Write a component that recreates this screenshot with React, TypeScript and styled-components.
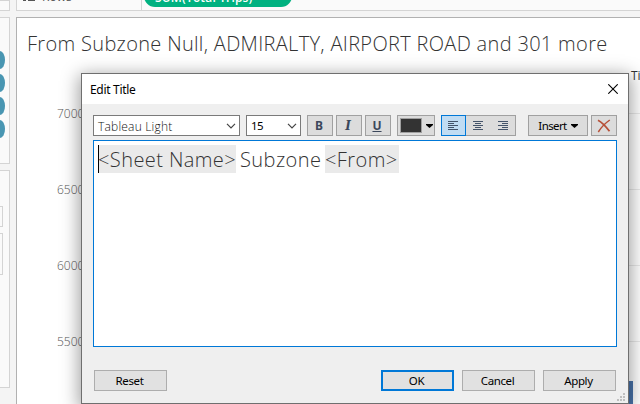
import React from "react";
import styled, { createGlobalStyle } from "styled-components";

const GlobalStyle = createGlobalStyle`
  * { box-sizing: border-box; }
  body { margin: 0; overflow: hidden; background: #f4f4f4; font-family: "Open Sans", sans-serif; }
`;

const Workspace = styled.div`
  position: relative;
  width: 640px;
  height: 404px;
  overflow: hidden;
  display: grid;
  grid-template-columns: 10px 624px;
  column-gap: 6px;
  background: #f4f4f4;
`;

const Sidebar = styled.aside`
  display: flex;
  flex-direction: column;
  gap: 6px;
  height: 404px;
`;

const Card = styled.section<{ $height: number }>`
  height: ${(p) => p.$height}px;
  flex: none;
  background: #fafafa;
  border: solid #d4d4d4;
  border-width: 1px 1px 1px 0;
  overflow: hidden;
`;

const MarksCard = styled(Card)`
  display: flex;
  flex-direction: column;
  gap: 5px;
  padding-top: 33px;
`;

const FieldEnd = styled.div`
  width: 5px;
  height: 18px;
  flex: none;
  border-radius: 0 5px 5px 0 / 0 9px 9px 0;
  background: #4996b2;
`;

const LegendCard = styled(Card)`
  padding-top: 35px;
`;

const LegendBox = styled.div<{ $height: number }>`
  width: 3px;
  height: ${(p) => p.$height}px;
  margin-bottom: 6px;
  border: solid #d4d4d4;
  border-width: 1px 1px 1px 0;
`;

const Main = styled.main`
  display: flex;
  flex-direction: column;
  gap: 6px;
`;

const Shelf = styled.div`
  height: 11px;
  flex: none;
  display: grid;
  grid-template-columns: 125px 1fr;
  background: #fafafa;
  border: solid #d4d4d4;
  border-width: 0 0 1px 1px;
  overflow: hidden;
`;

const ShelfName = styled.div`
  display: flex;
  gap: 7px;
  padding-left: 6px;
  border-right: 1px solid #d4d4d4;
  color: #555;
  font-size: 12px;
  line-height: 16px;
  span { margin-top: -11px; }
`;

const Pill = styled.div`
  width: 148px;
  height: 22px;
  margin: -15px 0 0 2px;
  padding-left: 11px;
  border-radius: 11px;
  background: #00b180;
  color: #fff;
  font-size: 12px;
  font-weight: 600;
  line-height: 25px;
  letter-spacing: 0.15px;
`;

const Sheet = styled.section`
  flex: 1;
  position: relative;
  padding: 14px 0 0 10px;
  background: #fff;
  border: solid #b1b1b1;
  border-width: 1px 0 0 1px;
  overflow: hidden;
`;

const SheetTitle = styled.h1`
  margin: 0;
  height: 24px;
  color: #333;
  font-size: 20px;
  font-weight: 300;
  line-height: 24px;
  letter-spacing: 0.32px;
  white-space: nowrap;
`;

const Chart = styled.div`
  height: 350px;
  padding-top: 19px;
`;

const AxisRow = styled.div`
  display: flex;
  align-items: center;
  height: 76px;
  color: #555;
  font-size: 12px;
  font-weight: 300;
  padding-left: 30px;
  &::after { content: ""; flex: 1; height: 1px; margin-left: 8px; background: #e9e9e9; }
`;

const HeaderText = styled.div`
  position: absolute;
  left: 614px;
  top: 51px;
  color: #333;
  font-size: 12px;
  line-height: 14px;
`;

const Bar = styled.div<{ $x: number }>`
  position: absolute;
  left: ${(p) => p.$x}px;
  top: 363px;
  width: 45px;
  height: 24px;
  background: #4a74ab;
`;

const Dialog = styled.div`
  position: absolute;
  left: 81px;
  top: 73px;
  width: 548px;
  height: 331px;
  background: #efefef;
  border: 1px solid #6f6f6f;
  box-shadow: 0 4px 17px 2px rgba(0, 0, 0, 0.38);
  color: #000;
  font-family: "Noto Sans", sans-serif;
  font-size: 12px;
`;

const TitleBar = styled.header`
  display: flex;
  align-items: center;
  justify-content: space-between;
  height: 30px;
  padding: 0 10px 0 8px;
  background: #fff;
  letter-spacing: -0.3px;
`;

const Toolbar = styled.div`
  display: flex;
  height: 21px;
  margin: 11px 0 4px 11px;
`;

const Select = styled.div<{ $width: number }>`
  display: flex;
  align-items: center;
  justify-content: space-between;
  width: ${(p) => p.$width}px;
  margin-right: 6px;
  padding: 0 3px 0 4px;
  background: #fff;
  border: 1px solid #7a7a7a;
  font-family: "Noto Sans", sans-serif;
  font-size: 11.5px;
  letter-spacing: -0.5px;
`;

const FontName = styled.span`
  font-family: "Open Sans", sans-serif;
  font-weight: 300;
  color: #111;
  font-size: 12px;
  letter-spacing: 0.2px;
  padding-top: 2px;
`;

const ToolButton = styled.button<{ $width?: number; $gap?: number }>`
  display: flex;
  align-items: center;
  justify-content: center;
  width: ${(p) => p.$width ?? 26}px;
  height: 21px;
  margin: 0 ${(p) => p.$gap ?? 3}px 0 0;
  padding: 0;
  background: #dcdcdc;
  border: 1px solid #a0a0a0;
  color: #000;
  font: 11.5px "Noto Sans", sans-serif;
  letter-spacing: -0.6px;
`;

const StyleButton = styled(ToolButton)<{ $italic?: boolean; $underline?: boolean }>`
  color: #3b475b;
  padding-right: 2px;
  letter-spacing: 0;
  font: ${(p) => (p.$italic ? "italic 700 13px 'DejaVu Serif', serif" : "700 12px 'Noto Sans', sans-serif")};
  font-size: 12px;
  text-decoration: ${(p) => (p.$underline ? "underline" : "none")};
`;

const InsertLabel = styled.span`
  margin-right: 4px;
`;

const Swatch = styled.span`
  width: 22px;
  height: 15px;
  margin-right: 4px;
  background: #333;
  border: 1px solid #a0a0a0;
`;

const AlignGroup = styled.div`
  display: flex;
  width: 75px;
  margin-right: 12px;
  background: #dcdcdc;
  border: 1px solid #a0a0a0;
`;

const AlignOption = styled.div<{ $active?: boolean }>`
  display: flex;
  align-items: center;
  justify-content: center;
  width: 25px;
  margin: ${(p) => (p.$active ? "-1px 0 -1px -1px" : "0")};
  border: ${(p) => (p.$active ? "1px solid #0078d7" : "0")};
  background: ${(p) => (p.$active ? "#c0dcf3" : "transparent")};
`;

const Editor = styled.div`
  display: flex;
  width: 524px;
  height: 207px;
  margin-left: 11px;
  padding: 4px;
  background: #fff;
  border: 1px solid #0078d7;
  color: #333;
  font-family: "Open Sans", sans-serif;
  font-size: 20px;
  font-weight: 300;
  line-height: 29px;
  letter-spacing: 0.42px;
  white-space: nowrap;
`;

const Token = styled.span<{ $width: number; $caret?: boolean }>`
  width: ${(p) => p.$width}px;
  height: 28px;
  background: #eaeaea;
  box-shadow: ${(p) => (p.$caret ? "inset 1px 0 #000" : "none")};
`;

const PlainText = styled.span`
  width: 89px;
  padding-left: 4px;
`;

const Footer = styled.footer`
  display: flex;
  gap: 8px;
  padding: 23px 0 0 12px;
`;

const PushButton = styled.button<{ $primary?: boolean; $first?: boolean }>`
  width: 73px;
  height: 21px;
  margin: 0 ${(p) => (p.$first ? 206 : 0)}px 0 0;
  padding: 0 2px 0 0;
  background: #e1e1e1;
  border: ${(p) => (p.$primary ? "2px solid #0078d7" : "1px solid #adadad")};
  color: #000;
  font: 11.5px/18px "Noto Sans", sans-serif;
  letter-spacing: -0.4px;
`;

const Grip = styled.svg`
  position: absolute;
  right: 3px;
  bottom: 2px;
`;

const Chevron = () => (
  <svg width="10" height="6" viewBox="0 0 10 6">
    <path d="M1 .8 5 4.8 9 .8" fill="none" stroke="#444" strokeWidth="1.2" />
  </svg>
);

const Arrow = () => (
  <svg width="7" height="4" viewBox="0 0 7 4">
    <path d="M0 0h7v1L3.5 4 0 1z" fill="#000" />
  </svg>
);

const alignStarts = { left: [0, 0], center: [0, 2], right: [0, 4] };

const AlignIcon = ({ side }: { side: keyof typeof alignStarts }) => (
  <svg width="10" height="9" viewBox="0 0 10 9" shapeRendering="crispEdges">
    {[0, 1, 2, 3, 4].map((i) => (
      <rect key={i} x={alignStarts[side][i % 2]} y={i * 2} width={i % 2 ? 6 : 10} height="1" fill="#44546a" />
    ))}
  </svg>
);

export default function App() {
  return (
    <>
      <GlobalStyle />
      <Workspace>
        <Sidebar>
          <Card $height={11} />
          <MarksCard $height={147}>
            <FieldEnd /><FieldEnd /><FieldEnd /><FieldEnd />
          </MarksCard>
          <LegendCard $height={218}>
            <LegendBox $height={21} />
            <LegendBox $height={42} />
          </LegendCard>
        </Sidebar>
        <Main>
          <Shelf>
            <ShelfName>
              <svg width="12" height="3" viewBox="0 0 12 3" shapeRendering="crispEdges">
                <path d="M0 0h3v1H0zM5 0h7v1H5z" fill="#555" />
              </svg>
              <span>Rows</span>
            </ShelfName>
            <Pill>SUM(Total Trips)</Pill>
          </Shelf>
          <Sheet>
            <SheetTitle>From Subzone Null, ADMIRALTY, AIRPORT ROAD and 301 more</SheetTitle>
            <Chart>
              {[7000, 6500, 6000, 5500].map((v) => <AxisRow key={v}>{v}</AxisRow>)}
            </Chart>
            <HeaderText>Time</HeaderText>
            {[211, 271, 571].map((x) => <Bar key={x} $x={x} />)}
          </Sheet>
        </Main>
        <Dialog role="dialog" aria-label="Edit Title">
          <TitleBar>
            Edit Title
            <svg width="10" height="10" viewBox="0 0 10 10">
              <path d="m.3.3 9.4 9.4M9.7.3.3 9.7" stroke="#000" strokeWidth="1.1" />
            </svg>
          </TitleBar>
          <Toolbar>
            <Select $width={147}><FontName>Tableau Light</FontName><Chevron /></Select>
            <Select $width={55}>15<Chevron /></Select>
            <StyleButton>B</StyleButton>
            <StyleButton $italic>I</StyleButton>
            <StyleButton $underline $gap={6}>U</StyleButton>
            <ToolButton $width={38} $gap={6}><Swatch /><Arrow /></ToolButton>
            <AlignGroup>
              <AlignOption $active><AlignIcon side="left" /></AlignOption>
              <AlignOption><AlignIcon side="center" /></AlignOption>
              <AlignOption><AlignIcon side="right" /></AlignOption>
            </AlignGroup>
            <ToolButton $width={60}><InsertLabel>Insert</InsertLabel><Arrow /></ToolButton>
            <ToolButton $gap={0}>
              <svg width="14" height="14" viewBox="0 0 14 14">
                <path d="M1 1.200c3 1.500 8 6.500 11.500 11" fill="none" stroke="#b75038" strokeWidth="1.800" />
                <path d="M12.800 1C8.500 4 4 8.500 1.300 13" fill="none" stroke="#b75038" strokeWidth="1.500" />
              </svg>
            </ToolButton>
          </Toolbar>
          <Editor>
            <Token $width={138} $caret>&lt;Sheet Name&gt;</Token>
            <PlainText>Subzone</PlainText>
            <Token $width={74}>&lt;From&gt;</Token>
          </Editor>
          <Footer>
            <PushButton $first>Reset</PushButton>
            <PushButton $primary>OK</PushButton>
            <PushButton>Cancel</PushButton>
            <PushButton>Apply</PushButton>
          </Footer>
          <Grip width="8" height="8" viewBox="0 0 8 8" shapeRendering="crispEdges">
            <path d="M6 0h2v2H6zM3 3h2v2H3zM6 3h2v2H6zM0 6h2v2H0zM3 6h2v2H3zM6 6h2v2H6z" fill="#bfbfbf" />
          </Grip>
        </Dialog>
      </Workspace>
    </>
  );
}
